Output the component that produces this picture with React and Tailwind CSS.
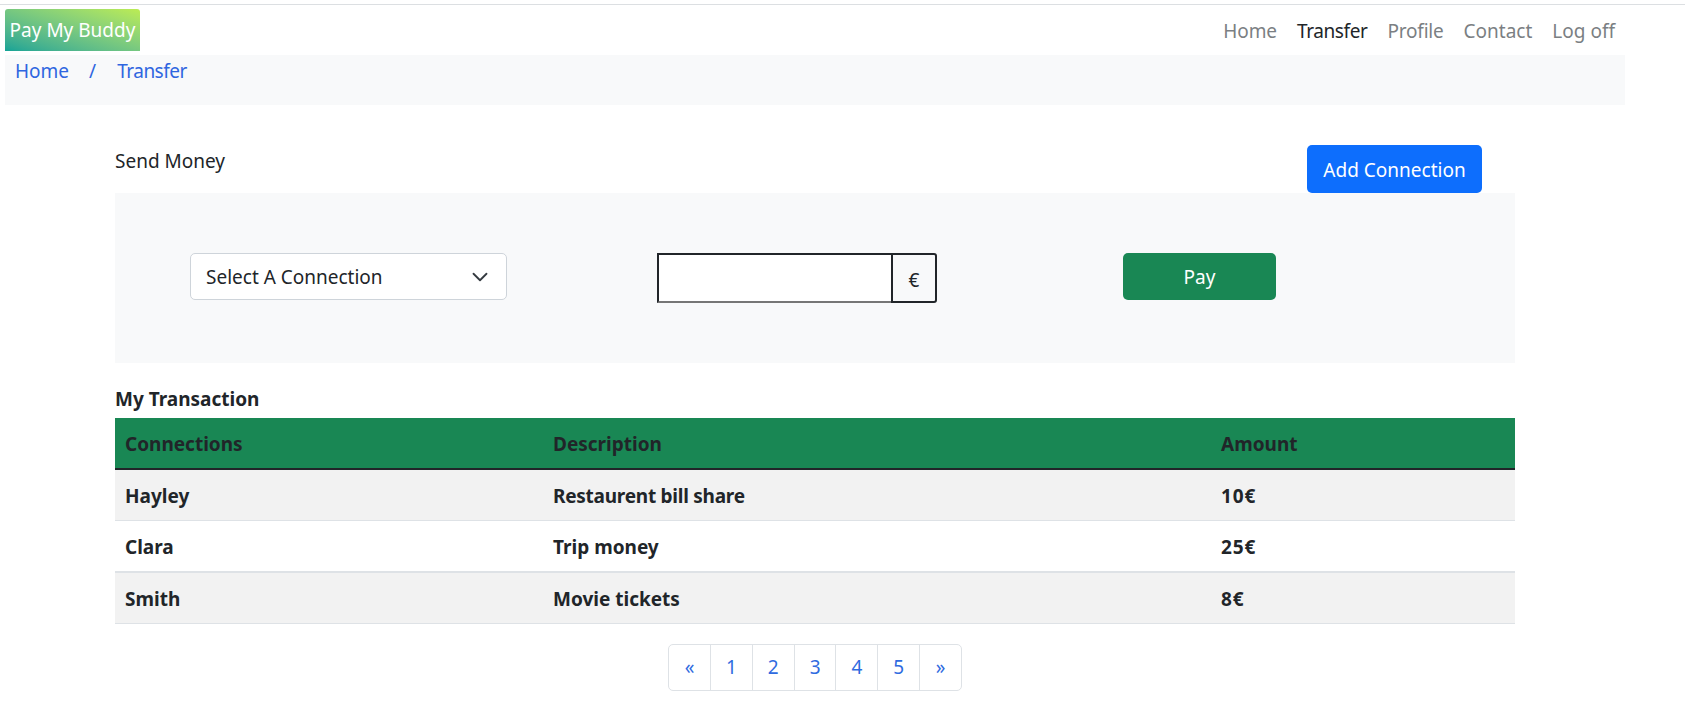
import { ChevronDown } from "lucide-react";

const rows = [
  { name: "Hayley", description: "Restaurent bill share", descClass: "tracking-[-0.25px]", amount: "10€", rowClass: "h-[51px] border-b border-[#dee2e6] bg-[#f2f2f2]" },
  { name: "Clara", description: "Trip money", descClass: "", amount: "25€", rowClass: "h-[52px] border-b-2 border-[#dee2e6] bg-white" },
  { name: "Smith", description: "Movie tickets", descClass: "", amount: "8€", rowClass: "h-[51px] border-b border-[#dee2e6] bg-[#f2f2f2]" },
];

const navLinks = [
  { label: "Home", className: "text-[#7b7f83] tracking-[-0.1px]" },
  { label: "Transfer", className: "text-[#212529] tracking-[-0.4px]" },
  { label: "Profile", className: "text-[#7b7f83] tracking-[-0.2px]" },
  { label: "Contact", className: "text-[#7b7f83]" },
  { label: "Log off", className: "text-[#7b7f83]" },
];

const pages = ["«", "1", "2", "3", "4", "5", "»"];

function App() {
  return (
    <div className="min-h-[718px] bg-white pt-1 font-['Noto_Sans',sans-serif] text-[19px] leading-[30px] text-[#212529] overflow-hidden">
      <div className="h-px bg-[#dcdfe2]" />

      <header className="flex justify-between w-[1625px] pl-[5px]">
        <a className="mt-1 flex h-[42px] w-[135px] items-center justify-center rounded-t-[3px] bg-gradient-to-tr from-[#0fa396] to-[#bcec52] text-white">
          Pay My Buddy
        </a>
        <nav className="flex gap-5 pt-[11px] pr-[10px]">
          {navLinks.map((link) => (
            <a key={link.label} className={link.className}>
              {link.label}
            </a>
          ))}
        </nav>
      </header>

      <div className="mt-1 ml-[5px] flex h-[50px] w-[1620px] gap-5 bg-[#f8f9fa] pl-[10px] pt-px text-[#2f66e0]">
        <a>Home</a>
        <span>/</span>
        <a className="pl-px tracking-[-0.5px]">Transfer</a>
      </div>

      <main className="ml-[115px] w-[1400px]">
        <div className="flex h-[88px] justify-between pr-[33px] pt-[40px]">
          <span className="pt-px">Send Money</span>
          <button className="h-[48px] w-[175px] rounded-[5px] bg-[#0d6efd] pt-px text-white">
            Add Connection
          </button>
        </div>

        <section className="flex h-[170px] items-start bg-[#f8f9fa] pt-[60px] pl-[75px]">
          <div className="flex h-[47px] w-[317px] items-center justify-between rounded-[5px] border border-[#ced4da] bg-white pl-[15px] pr-[13px] text-[#212529]">
            Select A Connection
            <ChevronDown className="size-[26px] text-[#343a40]" strokeWidth={1.7} />
          </div>
          <div className="ml-[150px] flex h-[50px] w-[280px]">
            <div className="w-[234px] border-2 border-r-0 border-[#212529] border-b-[#767676] bg-white" />
            <div className="flex flex-1 items-center justify-center rounded-r-[3px] border-2 border-[#212529] bg-[#f8f9fa] pt-[3px]">
              €
            </div>
          </div>
          <button className="ml-[186px] h-[47px] w-[153px] rounded-[5px] bg-[#198754] text-white">
            Pay
          </button>
        </section>

        <h2 className="mt-5 h-[35px] pt-px font-bold leading-[30px]">My Transaction</h2>

        <table className="w-full table-fixed border-collapse font-bold">
          <thead>
            <tr className="h-[51px] border-b-2 border-[#212529] bg-[#198754] text-left">
              <th className="w-[428px] pl-[10px] pt-px">Connections</th>
              <th className="w-[668px] pl-[10px] pt-px">Description</th>
              <th className="pl-[10px] pt-px">Amount</th>
            </tr>
          </thead>
          <tbody>
            {rows.map((row) => (
              <tr key={row.name} className={row.rowClass}>
                <td className="pl-[10px] pt-[3px]">{row.name}</td>
                <td className={"pl-[10px] pt-[3px] " + row.descClass}>{row.description}</td>
                <td className="pl-[10px] pt-[3px] tracking-[0.9px]">{row.amount}</td>
              </tr>
            ))}
          </tbody>
        </table>

        <ul className="mt-[20px] ml-[553px] flex h-[47px] w-[294px] rounded-[5px] border border-[#dee2e6] text-[#2f6be0]">
          {pages.map((page, i) => (
            <li
              key={page}
              className={
                i === 0
                  ? "flex w-[41px] flex-none items-center justify-center"
                  : "flex flex-1 items-center justify-center border-l border-[#dee2e6]"
              }
            >
              {page}
            </li>
          ))}
        </ul>
      </main>
    </div>
  );
}

export default App;
